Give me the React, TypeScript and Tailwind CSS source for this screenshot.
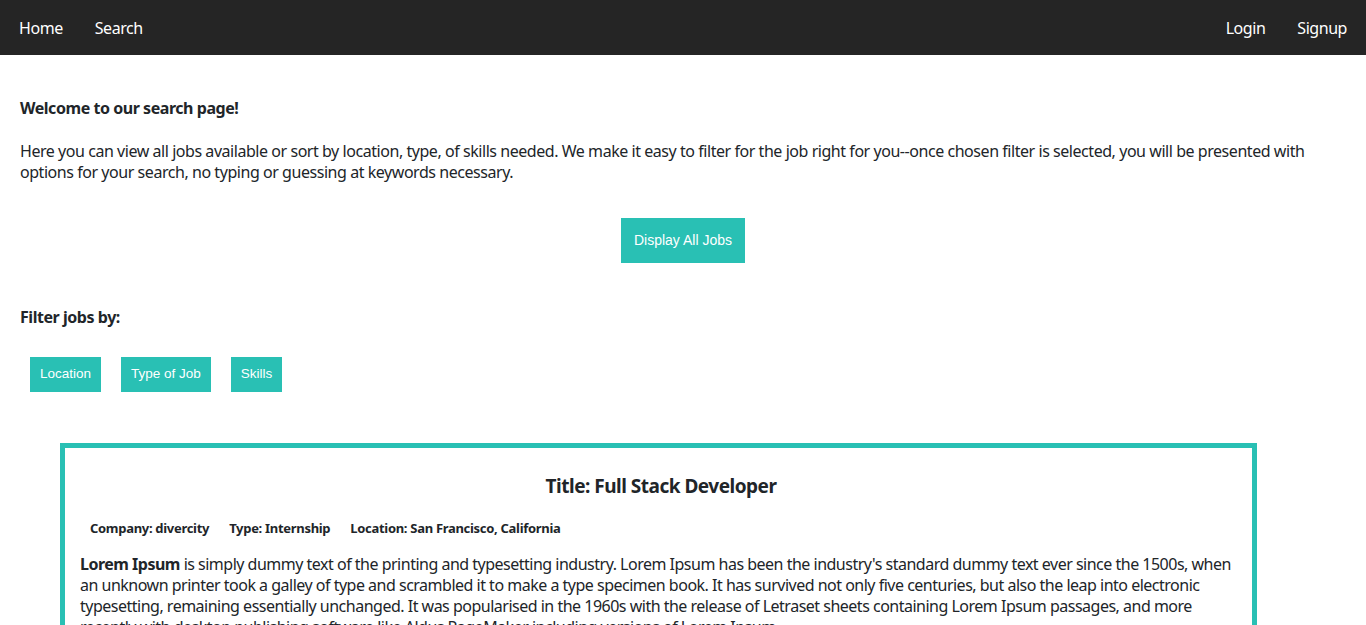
import React from 'react';

const FilterButton = ({ label }: { label: string }) => (
  <button className="h-[35px] px-[10px] bg-[#29c0b4] text-white text-[13.5px] font-['Liberation_Sans',Arial,sans-serif]">
    {label}
  </button>
);

export default function App() {
  return (
    <div className="min-h-screen bg-white text-[#212529] font-['Noto_Sans',sans-serif] text-[16px] tracking-[-0.45px]">
      <nav className="h-[55px] bg-[#252525] flex items-center justify-between pl-[19px] pr-[19px] text-white">
        <div className="flex gap-[32px]">
          <a>Home</a>
          <a>Search</a>
        </div>
        <div className="flex gap-[32px]">
          <a>Login</a>
          <a>Signup</a>
        </div>
      </nav>

      <main className="px-[20px]">
        <h3 className="font-bold pt-[41px] leading-[24px]">Welcome to our search page!</h3>
        <p className="mt-[21px] leading-[21px]">
          Here you can view all jobs available or sort by location, type, of skills needed. We make it easy to filter for the job right for you--once chosen filter is selected, you will be presented with options for your search, no typing or guessing at keywords necessary.
        </p>

        <div className="flex justify-center mt-[35px]">
          <button className="h-[45px] w-[124px] bg-[#29c0b4] text-white text-[14px] tracking-normal font-['Liberation_Sans',Arial,sans-serif]">
            Display All Jobs
          </button>
        </div>

        <h3 className="font-bold mt-[42px] leading-[24px]">Filter jobs by:</h3>

        <div className="flex gap-[20px] pl-[10px] mt-[28px] tracking-normal">
          <FilterButton label="Location" />
          <FilterButton label="Type of Job" />
          <FilterButton label="Skills" />
        </div>

        <section className="mx-[40px] mt-[51px] border-[5px] border-[#29c0b4] pl-[15px] pr-[10px] pb-[20px] w-[1197px]">
          <h2 className="text-center font-bold text-[19px] tracking-[-0.5px] pt-[25px] leading-[26px]">Title: Full Stack Developer</h2>
          <div className="flex gap-[20px] pl-[10px] mt-[20px] text-[13px] font-bold leading-[18px] tracking-[-0.3px]">
            <span>Company: divercity</span>
            <span>Type: Internship</span>
            <span>Location: San Francisco, California</span>
          </div>
          <p className="mt-[17px] leading-[21px] tracking-[-0.5px]">
            <b>Lorem Ipsum</b> is simply dummy text of the printing and typesetting industry. Lorem Ipsum has been the industry's standard dummy text ever since the 1500s, when an unknown printer took a galley of type and scrambled it to make a type specimen book. It has survived not only five centuries, but also the leap into electronic typesetting, remaining essentially unchanged. It was popularised in the 1960s with the release of Letraset sheets containing Lorem Ipsum passages, and more recently with desktop publishing software like Aldus PageMaker including versions of Lorem Ipsum.
          </p>
        </section>
      </main>
    </div>
  );
}
